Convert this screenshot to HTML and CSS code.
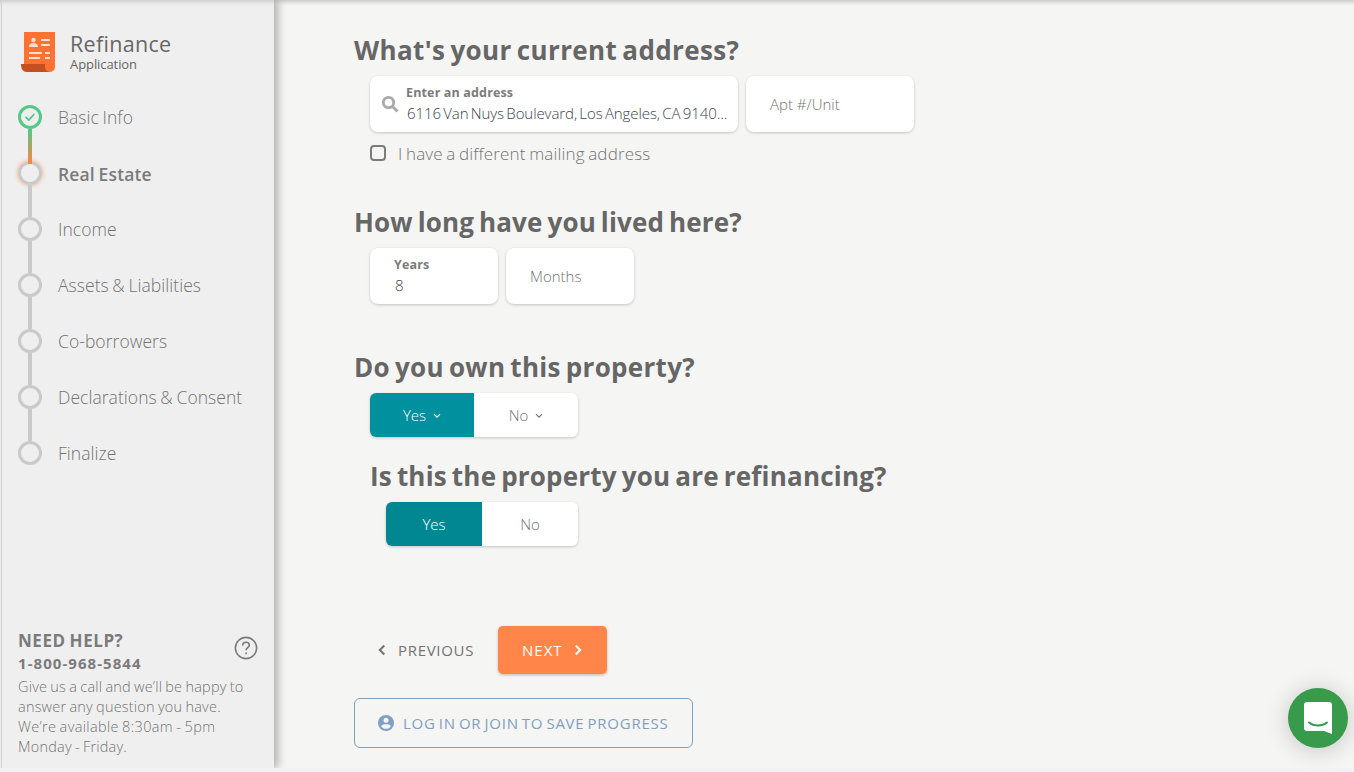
FILE: index.html
```html
<!DOCTYPE html>
<html lang="en">
<head>
<meta charset="utf-8">
<title>Refinance Application</title>
<link rel="stylesheet" href="styles.css">
</head>
<body>
<div class="app">
  <aside class="sidebar">
    <header class="brand">
      <svg class="brand-icon" viewBox="0 0 34 40">
        <path fill="#ff7232" d="M3 0h31v35a5 5 0 0 1-5 5H8L3 32z"/>
        <path fill="#c64f1f" d="M0 32h24v3a5 5 0 0 0 5 5H6c-4 0-6-3-6-8z"/>
        <g fill="#ffe0d0"><circle cx="12.500" cy="8" r="2.200"/><path d="M8 15c0-3 2-4 4.500-4s4.500 1 4.500 4zM20 7h9v2h-9zM20 12h9v2h-9zM8 20h13v2H8zM24 20h5v2h-5zM8 25h11v2H8zM24 25h5v2h-5z"/></g>
      </svg>
      <div>
        <div class="brand-name">Refinance</div>
        <div class="brand-sub">Application</div>
      </div>
    </header>
    <ol class="steps">
      <li class="step done"><i class="dot"><svg viewBox="0 0 24 24"><path d="m8 12.300 2.800 2.800 5-5.600"/></svg></i><span>Basic Info</span></li>
      <li class="step active"><i class="dot"></i><span>Real Estate</span></li>
      <li class="step"><i class="dot"></i><span>Income</span></li>
      <li class="step"><i class="dot"></i><span>Assets &amp; Liabilities</span></li>
      <li class="step"><i class="dot"></i><span>Co-borrowers</span></li>
      <li class="step"><i class="dot"></i><span>Declarations &amp; Consent</span></li>
      <li class="step"><i class="dot"></i><span>Finalize</span></li>
    </ol>
    <footer class="help">
      <div class="help-head">
        <div>
          <div class="help-title">NEED HELP?</div>
          <div class="help-phone">1-800-968-5844</div>
        </div>
        <svg class="help-icon" viewBox="0 0 24 24"><circle cx="12" cy="12" r="10.600"/><path d="M8.700 9.600c0-2 1.300-3.300 3.300-3.300s3.300 1.200 3.300 3c0 2.300-3.200 2.500-3.200 5M12.100 16.500v1.800"/></svg>
      </div>
      <p class="help-text">Give us a call and we’ll be happy to<br>answer any question you have.<br><span class="hours">We’re available 8:30am - 5pm</span><br>Monday - Friday.</p>
    </footer>
  </aside>
  <main class="main">
    <section class="question q-address">
      <h2>What's your current address?</h2>
      <div class="fields">
        <div class="field address">
          <svg class="search" viewBox="0 0 18 18"><circle cx="7.500" cy="7.500" r="5.200"/><path d="m11.500 11.500 5 5"/></svg>
          <div class="field-body"><div class="label">Enter an address</div><div class="value">6116 Van Nuys Boulevard, Los Angeles, CA 9140...</div></div>
        </div>
        <div class="field unit"><div class="placeholder">Apt #/Unit</div></div>
      </div>
      <label class="check"><i class="box"></i><span>I have a different mailing address</span></label>
    </section>
    <section class="question q-duration">
      <h2>How long have you lived here?</h2>
      <div class="fields">
        <div class="field short"><div class="field-body"><div class="label">Years</div><div class="value">8</div></div></div>
        <div class="field short"><div class="placeholder">Months</div></div>
      </div>
    </section>
    <section class="question q-own">
      <h2>Do you own this property?</h2>
      <div class="toggle wide">
        <div class="option selected"><span>Yes</span><svg viewBox="0 0 8 6"><path d="m1 1.200 3 3 3-3"/></svg></div>
        <div class="option"><span>No</span><svg viewBox="0 0 8 6"><path d="m1 1.200 3 3 3-3"/></svg></div>
      </div>
    </section>
    <section class="question q-refi">
      <h2>Is this the property you are refinancing?</h2>
      <div class="toggle">
        <div class="option selected"><span>Yes</span></div>
        <div class="option"><span>No</span></div>
      </div>
    </section>
    <div class="actions">
      <div class="previous"><svg viewBox="0 0 8 12"><path d="M6.300 1.500 1.800 6l4.500 4.500"/></svg><span>PREVIOUS</span></div>
      <div class="next"><span>NEXT</span><svg viewBox="0 0 8 12"><path d="M1.700 1.500 6.200 6l-4.500 4.500"/></svg></div>
    </div>
    <div class="login"><svg viewBox="0 0 16 16"><circle cx="8" cy="8" r="8" fill="#819fbf"/><circle cx="8" cy="5.300" r="2.500" fill="#f5f5f4"/><path fill="#f5f5f4" d="M3 11.200C4 9.600 6 9.300 8 9.300s4 .3 5 1.900c-1 1.600-3 2.600-5 2.600s-4-1-5-2.600z"/></svg><span>LOG IN OR JOIN TO SAVE PROGRESS</span></div>
  </main>
</div>
<div class="chat"><svg viewBox="0 0 28 32"><path fill="#fff" d="M3 0h22a3 3 0 0 1 3 3v29l-8-3H3a3 3 0 0 1-3-3V3a3 3 0 0 1 3-3z"/><path fill="none" stroke="#379b4b" stroke-width="2" stroke-linecap="round" d="M5 20.500c5 4 13 4 18 0"/></svg></div>
</body>
</html>
```
FILE: styles.css
```css
* { box-sizing: border-box; }
body { margin: 0; height: 772px; overflow: hidden; background: #f0f2f4; color: #737373; font-family: "Open Sans", "Noto Sans", sans-serif; font-weight: 330; font-size: 15px; white-space: nowrap; }
svg { display: block; flex: none; }
.app { display: flex; height: 768px; overflow: hidden; padding-left: 1px; background: #f5f5f4; box-shadow: inset 0 5px 4px -3px rgba(0,0,0,.2); }
.sidebar { width: 273px; flex: none; display: flex; flex-direction: column; padding-left: 16px; border-left: 1px solid #d4d4d4; background: #efefef; box-shadow: 4px 0 8px rgba(0,0,0,.28), inset 0 5px 4px -3px rgba(0,0,0,.15); }
.brand { display: flex; gap: 15px; padding: 32px 0 0 3px; height: 89px; color: #666; }
.brand-icon { width: 34px; height: 40px; }
.brand-name { font-size: 21.500px; line-height: 24px; height: 25px; font-weight: 500; letter-spacing: .3px; }
.brand-sub { font-size: 13px; line-height: 14px; font-weight: 400; letter-spacing: -.08px; }
.steps { list-style: none; margin: 0; padding: 0; }
.step { height: 56px; display: flex; align-items: center; gap: 16px; font-size: 17.500px; letter-spacing: .05px; word-spacing: -1px; position: relative; }
.step span { margin-top: -1px; }
.dot { width: 24px; height: 24px; border: 3px solid #c9c9c9; border-radius: 50%; flex: none; }
.step:not(:last-child)::after { content: ""; position: absolute; left: 10px; top: 40px; width: 4px; height: 32px; background: #c9c9c9; }
.step.done .dot { border-color: #52c986; }
.dot svg { width: 24px; height: 24px; margin: -3px; fill: none; stroke: #52c986; stroke-width: 1.800; stroke-linecap: round; stroke-linejoin: round; }
.step.done:not(:last-child)::after { z-index: 1; height: 35px; background: linear-gradient(#52c986, #ff8347); }
.step.active { font-weight: 600; letter-spacing: .15px; color: #7b7b7b; }
.step.active span { margin-top: 1px; }
.step.active .dot { box-shadow: 0 0 4px #ff9b6c; }
.help { margin-top: auto; height: 138px; }
.help-head { display: flex; justify-content: space-between; padding-right: 16px; color: #7b7b7b; }
.help-title { font-size: 17px; line-height: 22px; font-weight: 700; letter-spacing: .55px; word-spacing: -1px; }
.help-phone { font-size: 15px; line-height: 22px; font-weight: 700; letter-spacing: 1.050px; }
.help-icon { width: 24px; height: 24px; margin-top: 6px; fill: none; stroke: #7b7b7b; stroke-width: 1.600; }
.help-text { margin: 3px 0 0; line-height: 20px; font-size: 14.500px; letter-spacing: .2px; word-spacing: -.8px; }
.hours { letter-spacing: .34px; }
.main { padding: 34px 0 0 80px; display: flex; flex-direction: column; align-items: flex-start; }
h2 { margin: 0; height: 42px; line-height: 33px; font-size: 26px; font-weight: 700; color: #666; word-spacing: -2px; }
.q-address { height: 172px; }
.q-address h2 { letter-spacing: .37px; }
.q-duration { height: 145px; }
.q-duration h2 { letter-spacing: .16px; }
.q-own { height: 109px; }
.q-own h2 { letter-spacing: .3px; }
.q-refi { height: 166px; padding-left: 16px; }
.q-refi h2 { letter-spacing: .2px; }
.fields { display: flex; gap: 8px; margin-left: 16px; }
.field { height: 56px; border-radius: 8px; background: #fff; box-shadow: 0 1px 3px rgba(0,0,0,.2); display: flex; align-items: center; padding-left: 24px; }
.address { width: 368px; padding-left: 11px; gap: 7px; }
.unit { width: 168px; }
.short { width: 128px; }
.search { width: 18px; height: 18px; fill: none; stroke: #a9a9a9; stroke-width: 2.800; }
.field-body { margin-top: -4px; }
.label { font-size: 12.500px; line-height: 21px; font-weight: 700; letter-spacing: .15px; color: #7b7b7b; }
.value { padding-left: 1px; line-height: 20px; color: #3c434a; letter-spacing: -.08px; word-spacing: -1.500px; }
.check { display: flex; align-items: center; gap: 12px; margin: 11px 0 0 16px; font-size: 17px; line-height: 22px; letter-spacing: .15px; word-spacing: -1px; }
.box { width: 16px; height: 16px; margin-bottom: 2px; border: 2px solid #7b7b7b; border-radius: 4px; }
.toggle { margin-left: 16px; width: 192px; height: 44px; display: flex; border-radius: 6px; overflow: hidden; background: #fff; box-shadow: 0 1px 3px rgba(0,0,0,.2); }
.wide { width: 208px; }
.option { flex: 1; display: flex; align-items: center; justify-content: center; gap: 7px; }
.option svg { width: 8px; height: 6px; margin-top: 2px; fill: none; stroke: currentColor; stroke-width: 1.200; }
.selected { background: #008792; color: #fff; }
.wide .selected { background: #00909e; }
.actions { display: flex; height: 72px; font-weight: 500; letter-spacing: .7px; }
.actions svg { width: 8px; height: 12px; fill: none; stroke: currentColor; stroke-width: 2; }
.previous { width: 144px; height: 48px; padding-left: 24px; display: flex; align-items: center; gap: 12px; }
.next { width: 109px; height: 48px; padding-left: 24px; display: flex; align-items: center; gap: 11px; letter-spacing: 1px; color: #fff; background: #ff8549; border-radius: 5px; box-shadow: 0 1px 3px rgba(0,0,0,.25); }
.login { width: 339px; height: 50px; padding-left: 23px; display: flex; align-items: center; gap: 9px; border: 1px solid #819fbf; border-radius: 6px; color: #819fbf; font-weight: 500; letter-spacing: .75px; word-spacing: -1.500px; }
.login svg { width: 16px; height: 16px; }
.chat { position: absolute; left: 1288px; top: 688px; width: 60px; height: 60px; border-radius: 50%; background: #379b4b; display: flex; align-items: center; justify-content: center; box-shadow: 0 2px 24px rgba(0,0,0,.2); }
.chat svg { width: 28px; height: 32px; }
```
